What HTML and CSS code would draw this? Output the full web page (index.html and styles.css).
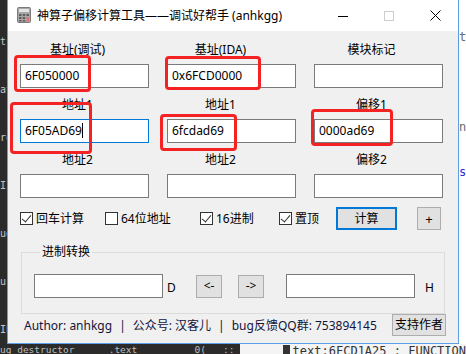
FILE: index.html
```html
<!DOCTYPE html>
<html lang="zh-CN">
  <head>
    <meta charset="UTF-8" />
    <title>神算子偏移计算工具</title>
    <link rel="stylesheet" href="styles.css">
  </head>
  <body>
    <div class="screen">
      <div class="desk">
        <div class="code-left">
          <div class="ln">t(</div>
          <div class="ln">at</div>
          <div class="ln">ro</div>
          <div class="ln">II</div>
          <div class="ln">ug</div>
          <div class="ln">ur</div>
          <div class="ln">Ib</div>
          <div class="ln hl">lo</div>
          <div class="ln">ui</div>
          <div class="ln"> d</div>
          <div class="ln">(v</div>
          <div class="ln">cs</div>
          <div class="ln">:)</div>
          <div class="ln"></div>
          <div class="ln">:)</div>
          <div class="ln">&lt;</div>
          <div class="ln"></div>
          <div class="ln">cs</div>
          <div class="ln">lo</div>
          <div class="ln">[I</div>
          <div class="ln">ug</div>
        </div>

        <div class="window">
          <div class="titlebar">
            <svg class="app-icon" width="14" height="16" viewBox="0 0 14 16">
              <rect x="0.5" y="0.5" width="13" height="15" rx="1" fill="#a8a8a8" stroke="#7a7a7a"/>
              <rect x="2" y="2" width="10" height="3" fill="#e4e4e4"/>
              <g fill="#5e5e5e">
                <rect x="2" y="7" width="2.5" height="2"/>
                <rect x="5.75" y="7" width="2.5" height="2"/>
                <rect x="9.5" y="7" width="2.5" height="2"/>
                <rect x="2" y="10" width="2.5" height="2"/>
                <rect x="5.75" y="10" width="2.5" height="2"/>
                <rect x="2" y="13" width="2.5" height="1.5"/>
                <rect x="5.75" y="13" width="2.5" height="1.5"/>
              </g>
              <rect x="9.5" y="10" width="2.5" height="4.5" fill="#e2707a"/>
            </svg>
            <span class="title">神算子偏移计算工具——调试好帮手 (anhkgg)</span>
            <div class="caption">
              <span class="cap-btn">
                <svg width="10" height="10" viewBox="0 0 10 10"><path d="M0 5.5h10" stroke="#000" stroke-width="1"/></svg>
              </span>
              <span class="cap-btn">
                <svg width="10" height="10" viewBox="0 0 10 10"><rect x="0.5" y="0.5" width="9" height="9" fill="none" stroke="#cccccc"/></svg>
              </span>
              <span class="cap-btn">
                <svg width="11" height="11" viewBox="0 0 11 11"><path d="M0.5 0.5l10 10M10.5 0.5l-10 10" stroke="#000" stroke-width="1"/></svg>
              </span>
            </div>
          </div>

          <div class="client">
            <div class="fields">
              <div class="field"><span class="label">基址(调试)</span><div class="box">6F050000</div></div>
              <div class="field"><span class="label">基址(IDA)</span><div class="box">0x6FCD0000</div></div>
              <div class="field"><span class="label">模块标记</span><div class="box"></div></div>
              <div class="field"><span class="label">地址1</span><div class="box focus">6F05AD69<span class="caret"></span></div></div>
              <div class="field"><span class="label">地址1</span><div class="box">6fcdad69</div></div>
              <div class="field"><span class="label">偏移1</span><div class="box">0000ad69</div></div>
              <div class="field"><span class="label">地址2</span><div class="box"></div></div>
              <div class="field"><span class="label">地址2</span><div class="box"></div></div>
              <div class="field"><span class="label">偏移2</span><div class="box"></div></div>
            </div>

            <div class="options">
              <label class="check w1"><span class="cb on"></span>回车计算</label>
              <label class="check w2"><span class="cb"></span>64位地址</label>
              <label class="check w3"><span class="cb on"></span>16进制</label>
              <label class="check w4"><span class="cb on"></span>置顶</label>
              <button class="btn btn-calc">计算</button>
              <button class="btn btn-plus">+</button>
            </div>

            <fieldset class="convert">
              <legend>进制转换</legend>
              <div class="convert-row">
                <div class="box"></div>
                <span class="unit">D</span>
                <button class="btn btn-arrow">&lt;-</button>
                <button class="btn btn-arrow next">-&gt;</button>
                <div class="box hex"></div>
                <span class="unit-h">H</span>
              </div>
            </fieldset>

            <div class="footer">
              <span>Author: anhkgg</span>
              <span class="sep">|</span>
              <span>公众号: 汉客儿</span>
              <span class="sep">|</span>
              <span>bug反馈QQ群: 753894145</span>
              <button class="btn btn-support">支持作者</button>
            </div>
          </div>
        </div>

        <div class="code-right">
          <div class="rl">te</div>
          <div class="rl"></div>
          <div class="rl">ni</div>
          <div class="rl blue">ss</div>
          <div class="rl gap"></div>
          <div class="rl">N</div>
          <div class="rl">N</div>
        </div>
      </div>

      <div class="desk-bottom">
        <div class="bottom-dark">ug destructor      .text          0(   ::</div>
        <div class="bottom-light"><span class="block"></span>text:6FCD1A25 : FUNCTION</div>
      </div>

      <div class="mark mark-1"></div>
      <div class="mark mark-2"></div>
      <div class="mark mark-3"></div>
      <div class="mark mark-4"></div>
      <div class="mark mark-5"></div>
    </div>
  </body>
</html>
```

FILE: styles.css
```css
* {
  margin: 0;
  padding: 0;
  box-sizing: border-box;
}

body {
  width: 466px;
  height: 354px;
  overflow: hidden;
  background: #2b2b2b;
  font-family: "Noto Sans", "Noto Sans CJK SC", sans-serif;
  font-size: 12px;
  color: #000;
}

.screen {
  position: relative;
  width: 466px;
  height: 354px;
}

.desk {
  display: flex;
  height: 344px;
}

/* editor behind the window */
.code-left {
  width: 7px;
  background: #2b2b2b;
  color: #c4c4c4;
  font: 10px/16px "DejaVu Sans Mono", monospace;
  white-space: pre;
  overflow: hidden;
  padding-top: 2px;
}

.code-left .hl {
  background: #3d3d3d;
}

.code-right {
  width: 7px;
  background: #ffffff;
  color: #6a6a6a;
  font: 12px/15px "DejaVu Sans Mono", monospace;
  white-space: pre;
  overflow: hidden;
}

.code-right .rl {
  height: 15px;
}

.code-right .blue {
  color: #2a2ad0;
}

.code-right .gap {
  height: 255px;
}

.desk-bottom {
  display: flex;
  height: 10px;
  overflow: hidden;
}

.bottom-dark {
  width: 240px;
  background: #2b2b2b;
  color: #bdbdbd;
  font: 9.5px/12px "DejaVu Sans Mono", monospace;
  white-space: pre;
}

.bottom-light {
  flex: 1;
  display: flex;
  align-items: flex-start;
  padding-left: 43px;
  background: #f4f4f4;
  color: #333;
  font: 12px/14px "DejaVu Sans Mono", monospace;
  white-space: pre;
}

.bottom-light .block {
  width: 7px;
  height: 10px;
  background: #333;
  margin: 1px 3px 0 0;
}

/* dialog window */
.window {
  width: 452px;
  border: 1px solid #5c9fe6;
  border-top: none;
  background: #f0f0f0;
  display: flex;
  flex-direction: column;
}

.titlebar {
  height: 31px;
  background: #ffffff;
  display: flex;
  align-items: center;
}

.app-icon {
  margin-left: 9px;
  margin-top: -1px;
}

.title {
  margin-left: 6px;
  line-height: 16px;
}

.caption {
  margin-left: auto;
  display: flex;
  height: 31px;
}

.cap-btn {
  width: 46px;
  height: 31px;
  display: flex;
  align-items: center;
  justify-content: center;
}

.client {
  flex: 1;
  padding-top: 11px;
}

.fields {
  display: grid;
  grid-template-columns: repeat(3, 129px);
  column-gap: 18px;
  row-gap: 9px;
  padding-left: 12px;
}

.field {
  display: flex;
  flex-direction: column;
  gap: 6px;
}

.label {
  line-height: 16px;
  text-align: center;
  padding-right: 14px;
}

.field:nth-child(3n+2) .label {
  padding-right: 22px;
}

.box {
  height: 24px;
  width: 129px;
  border: 1px solid #7a7a7a;
  background: #ffffff;
  padding-left: 4px;
  line-height: 22px;
  white-space: nowrap;
}

.box.focus {
  border-color: #0078d7;
}

.caret {
  display: inline-block;
  width: 1px;
  height: 15px;
  background: #000;
  vertical-align: -3px;
}

/* check boxes and buttons */
.options {
  display: flex;
  align-items: center;
  height: 23px;
  margin-top: 9px;
  padding-left: 12px;
}

.check {
  display: flex;
  align-items: center;
  gap: 3px;
  line-height: 16px;
}

.w1 { width: 85px; }
.w2 { width: 95px; }
.w3 { width: 79px; }
.w4 { width: 57px; }

.cb {
  width: 13px;
  height: 13px;
  border: 1px solid #333;
  background: #fff;
  position: relative;
}

.cb.on::after {
  content: "";
  position: absolute;
  left: 3px;
  top: 0;
  width: 4px;
  height: 8px;
  border-right: 1.3px solid #333;
  border-bottom: 1.3px solid #333;
  transform: rotate(40deg);
}

.btn {
  font-family: "Noto Sans", "Noto Sans CJK SC", sans-serif;
  font-size: 12px;
  color: #000;
  background: #e1e1e1;
  border: 1px solid #adadad;
  line-height: 16px;
  display: flex;
  align-items: center;
  justify-content: center;
}

.btn-calc {
  width: 61px;
  height: 23px;
  border: 2px solid #0078d7;
}

.btn-plus {
  width: 24px;
  height: 23px;
  margin-left: 20px;
  font-size: 13px;
}

/* conversion group */
.convert {
  margin: 14px 0 0 13px;
  width: 424px;
  border: 1px solid #dcdcdc;
  padding: 14px 0 15px 12px;
}

.convert legend {
  margin-left: 6px;
  padding: 0 2px;
  line-height: 16px;
}

.convert-row {
  display: flex;
  align-items: center;
  height: 24px;
}

.unit {
  width: 33px;
  padding-left: 4px;
  padding-top: 2px;
}

.btn-arrow {
  width: 26px;
  height: 23px;
}

.btn-arrow.next {
  margin-left: 16px;
}

.box.hex {
  margin-left: 22px;
}

.unit-h {
  margin-left: 10px;
  padding-top: 2px;
}

.footer {
  display: flex;
  align-items: center;
  height: 22px;
  padding-left: 16px;
  color: #14143a;
}

.sep {
  margin: 0 7px;
}

.btn-support {
  margin-left: auto;
  margin-right: 12px;
  width: 54px;
  height: 22px;
  padding: 0;
}

/* red annotation frames drawn over the screenshot */
.mark {
  position: absolute;
  border: 3px solid #f42222;
  border-radius: 4px;
}

.mark-1 { left: 14px; top: 55px; width: 77px; height: 37px; }
.mark-2 { left: 10px; top: 102px; width: 82px; height: 52px; }
.mark-3 { left: 165px; top: 56px; width: 96px; height: 34px; }
.mark-4 { left: 160px; top: 114px; width: 77px; height: 37px; }
.mark-5 { left: 311px; top: 109px; width: 82px; height: 37px; }
```
